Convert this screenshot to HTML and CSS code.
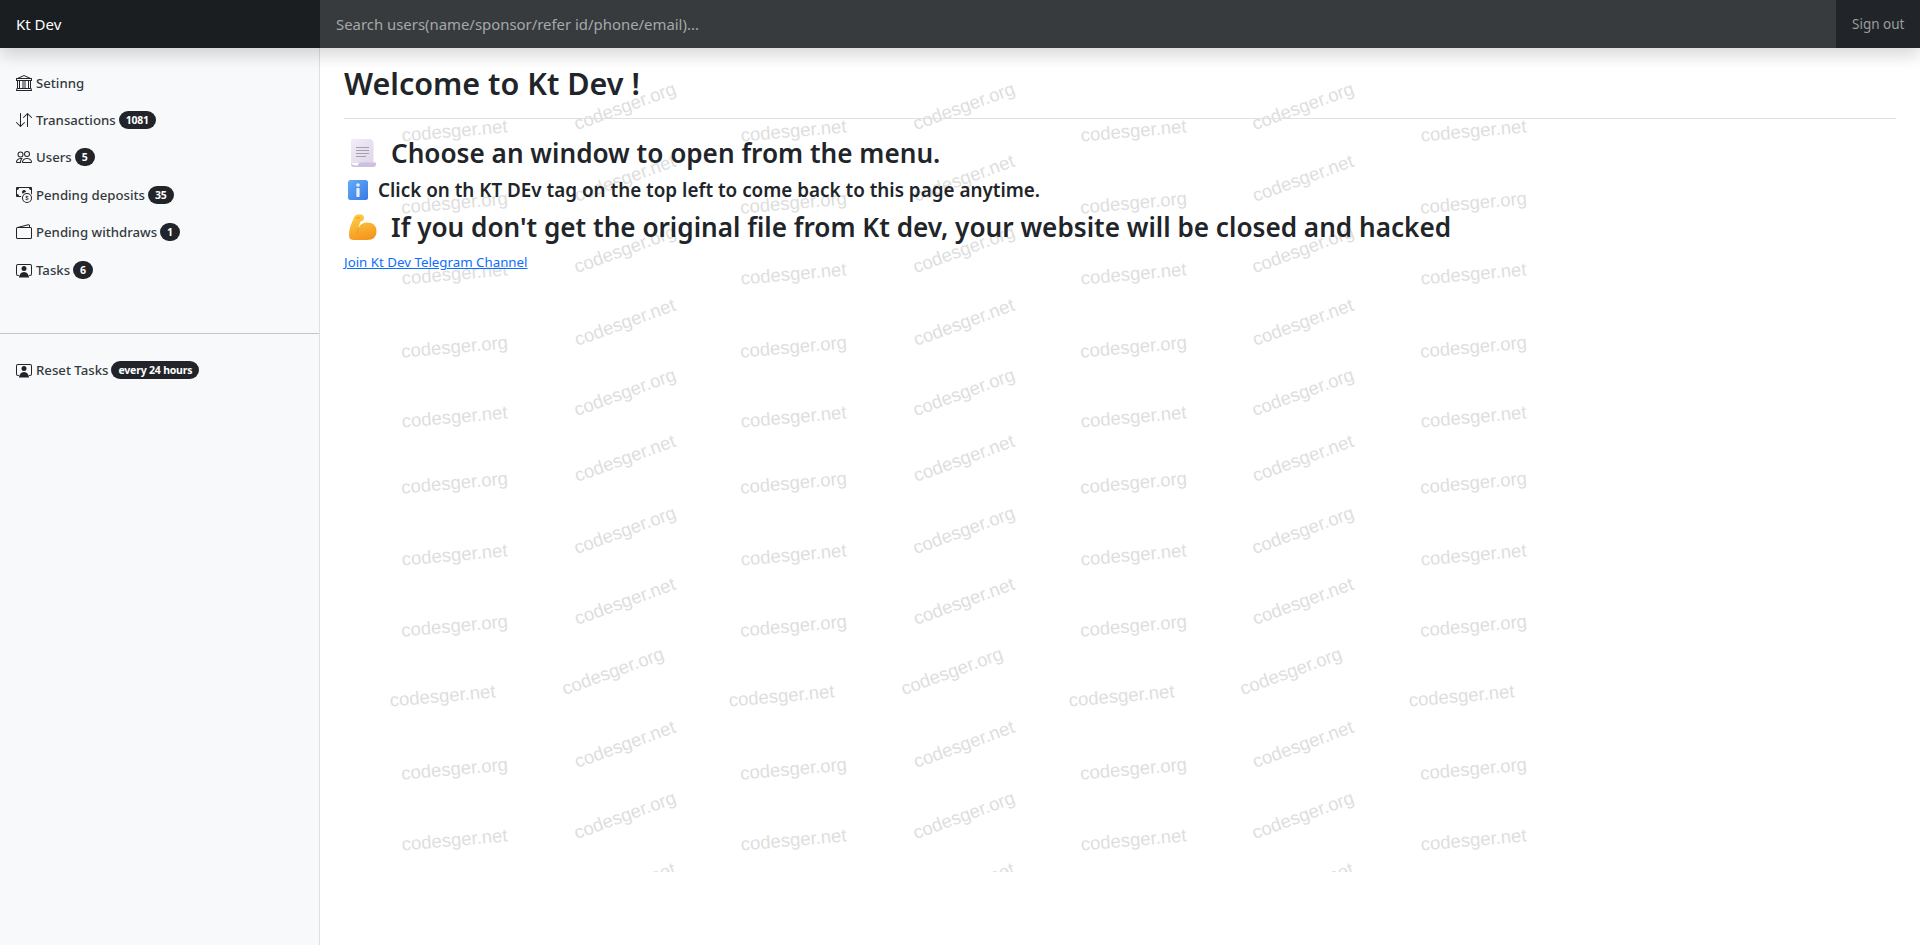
FILE: index.html
```html
<!DOCTYPE html>
<html lang="en">
<head>
<meta charset="utf-8">
<title>Kt Dev</title>
<link rel="stylesheet" href="styles.css">
</head>
<body>
<svg class="watermark" width="1920" height="872" viewBox="0 0 1920 872" aria-hidden="true">
  <defs>
    <g id="row-a">
      <text transform="translate(455 0) rotate(-5)">codesger.net</text>
      <text transform="translate(627 -25) rotate(-20)">codesger.org</text>
      <text transform="translate(794 0) rotate(-5)">codesger.net</text>
      <text transform="translate(966 -25) rotate(-20)">codesger.org</text>
      <text transform="translate(1134 0) rotate(-5)">codesger.net</text>
      <text transform="translate(1305 -25) rotate(-20)">codesger.org</text>
      <text transform="translate(1474 0) rotate(-5)">codesger.net</text>
    </g>
    <g id="row-b">
      <text transform="translate(455 0) rotate(-5)">codesger.org</text>
      <text transform="translate(627 -25) rotate(-20)">codesger.net</text>
      <text transform="translate(794 0) rotate(-5)">codesger.org</text>
      <text transform="translate(966 -25) rotate(-20)">codesger.net</text>
      <text transform="translate(1134 0) rotate(-5)">codesger.org</text>
      <text transform="translate(1305 -25) rotate(-20)">codesger.net</text>
      <text transform="translate(1474 0) rotate(-5)">codesger.org</text>
    </g>
  </defs>
  <use href="#row-a" y="137"/>
  <use href="#row-b" y="209"/>
  <use href="#row-a" y="280"/>
  <use href="#row-b" y="353"/>
  <use href="#row-a" y="423"/>
  <use href="#row-b" y="489"/>
  <use href="#row-a" y="561"/>
  <use href="#row-b" y="632"/>
  <use href="#row-a" x="-12" y="702"/>
  <use href="#row-b" y="775"/>
  <use href="#row-a" y="846"/>
  <use href="#row-b" y="917"/>
</svg>

<header class="navbar">
  <a class="brand" href="#">Kt Dev</a>
  <input class="search" type="text" placeholder="Search users(name/sponsor/refer id/phone/email)...">
  <a class="signout" href="#">Sign out</a>
</header>

<div class="layout">
  <nav class="sidebar">
    <ul class="menu">
      <li><a class="menu-link" href="#">
        <svg class="icon" viewBox="0 0 16 16"><path d="m8 0 6.61 3h.89a.5.5 0 0 1 .5.5v2a.5.5 0 0 1-.5.5H15v7a.5.5 0 0 1 .485.38l.5 2a.498.498 0 0 1-.485.62H.5a.498.498 0 0 1-.485-.62l.5-2A.501.501 0 0 1 1 13V6H.5a.5.5 0 0 1-.5-.5v-2A.5.5 0 0 1 .5 3h.89L8 0ZM3.777 3h8.447L8 1 3.777 3ZM2 6v7h1V6H2Zm2 0v7h2.5V6H4Zm3.5 0v7h1V6h-1Zm2 0v7H12V6H9.5ZM13 6v7h1V6h-1Zm2-1V4H1v1h14Zm-.39 9H1.39l-.25 1h13.72l-.25-1Z"/></svg>
        <span>Setinng</span></a></li>
      <li><a class="menu-link" href="#">
        <svg class="icon" viewBox="0 0 16 16"><path d="M11.5 15a.5.5 0 0 0 .5-.5V2.707l3.146 3.147a.5.5 0 0 0 .708-.708l-4-4a.5.5 0 0 0-.708 0l-4 4a.5.5 0 1 0 .708.708L11 2.707V14.5a.5.5 0 0 0 .5.5zm-7-14a.5.5 0 0 1 .5.5v11.793l3.146-3.147a.5.5 0 0 1 .708.708l-4 4a.5.5 0 0 1-.708 0l-4-4a.5.5 0 0 1 .708-.708L4 13.293V1.5a.5.5 0 0 1 .5-.5z"/></svg>
        <span>Transactions</span><span class="badge">1081</span></a></li>
      <li><a class="menu-link" href="#">
        <svg class="icon" viewBox="0 0 16 16"><path d="M15 14s1 0 1-1-1-4-5-4-5 3-5 4 1 1 1 1h8Zm-7.978-1A.261.261 0 0 1 7 12.996c.001-.264.167-1.03.76-1.72C8.312 10.629 9.282 10 11 10c1.717 0 2.687.63 3.24 1.276.593.69.758 1.457.76 1.72l-.008.002a.274.274 0 0 1-.014.002H7.022ZM11 7a2 2 0 1 0 0-4 2 2 0 0 0 0 4Zm3-2a3 3 0 1 1-6 0 3 3 0 0 1 6 0ZM6.936 9.28a5.88 5.88 0 0 0-1.23-.247A7.35 7.35 0 0 0 5 9c-4 0-5 3-5 4 0 .667.333 1 1 1h4.216A2.238 2.238 0 0 1 5 13c0-1.01.377-2.042 1.09-2.904.243-.294.526-.569.846-.816ZM4.92 10A5.493 5.493 0 0 0 4 13H1c0-.26.164-1.03.76-1.724.545-.636 1.492-1.256 3.16-1.275ZM1.5 5.5a3 3 0 1 1 6 0 3 3 0 0 1-6 0Zm3-2a2 2 0 1 0 0 4 2 2 0 0 0 0-4Z"/></svg>
        <span>Users</span><span class="badge">5</span></a></li>
      <li><a class="menu-link" href="#">
        <svg class="icon" viewBox="0 0 16 16"><path fill-rule="evenodd" d="M11 15a4 4 0 1 0 0-8 4 4 0 0 0 0 8zm5-4a5 5 0 1 1-10 0 5 5 0 0 1 10 0z"/><path d="M9.438 11.944c.047.596.518 1.06 1.363 1.116v.44h.375v-.443c.875-.061 1.386-.529 1.386-1.207 0-.618-.39-.936-1.09-1.1l-.296-.07v-1.2c.376.043.614.248.671.532h.658c-.047-.575-.54-1.024-1.329-1.073V8.5h-.375v.45c-.747.073-1.255.522-1.255 1.158 0 .562.378.92 1.007 1.066l.248.061v1.272c-.384-.058-.639-.27-.696-.563h-.668zm1.36-1.354c-.369-.085-.569-.26-.569-.522 0-.294.216-.514.572-.578v1.1h-.003zm.432.746c.449.104.655.272.655.569 0 .339-.257.571-.709.614v-1.195l.054.012z"/><path d="M1 0a1 1 0 0 0-1 1v8a1 1 0 0 0 1 1h4.083c.058-.344.145-.678.258-1H3a2 2 0 0 0-2-2V3a2 2 0 0 0 2-2h10a2 2 0 0 0 2 2v3.528c.38.34.717.728 1 1.154V1a1 1 0 0 0-1-1H1z"/><path d="M9.998 5.083 10 5a2 2 0 1 0-3.132 1.65 5.982 5.982 0 0 1 3.13-1.567z"/></svg>
        <span>Pending deposits</span><span class="badge">35</span></a></li>
      <li><a class="menu-link" href="#">
        <svg class="icon" viewBox="0 0 16 16"><path d="M12.136.326A1.5 1.5 0 0 1 14 1.78V3h.5A1.5 1.5 0 0 1 16 4.5v9a1.5 1.5 0 0 1-1.5 1.5h-13A1.5 1.5 0 0 1 0 13.5v-9a1.5 1.5 0 0 1 1.432-1.499L12.136.326zM5.562 3H13V1.78a.5.5 0 0 0-.621-.484L5.562 3zM1.5 4a.5.5 0 0 0-.5.5v9a.5.5 0 0 0 .5.5h13a.5.5 0 0 0 .5-.5v-9a.5.5 0 0 0-.5-.5h-13z"/></svg>
        <span>Pending withdraws</span><span class="badge">1</span></a></li>
      <li><a class="menu-link" href="#">
        <svg class="icon" viewBox="0 0 16 16"><path d="M8 9a2.5 2.5 0 1 0 0-5 2.5 2.5 0 0 0 0 5Z"/><path d="M2 2a2 2 0 0 0-2 2v8a2 2 0 0 0 2 2h.5a.5.5 0 0 0 0-1H2a1 1 0 0 1-1-1V4a1 1 0 0 1 1-1h12a1 1 0 0 1 1 1v8a1 1 0 0 1-1 1h-.5a.5.5 0 0 0 0 1h.5a2 2 0 0 0 2-2V4a2 2 0 0 0-2-2H2Z"/><path d="M3 15.6C3 13 5 10 8 10s5 3 5 5.6Z"/></svg>
        <span>Tasks</span><span class="badge">6</span></a></li>
    </ul>
    <hr class="divider">
    <ul class="menu">
      <li><a class="menu-link" href="#">
        <svg class="icon" viewBox="0 0 16 16"><path d="M8 9a2.5 2.5 0 1 0 0-5 2.5 2.5 0 0 0 0 5Z"/><path d="M2 2a2 2 0 0 0-2 2v8a2 2 0 0 0 2 2h.5a.5.5 0 0 0 0-1H2a1 1 0 0 1-1-1V4a1 1 0 0 1 1-1h12a1 1 0 0 1 1 1v8a1 1 0 0 1-1 1h-.5a.5.5 0 0 0 0 1h.5a2 2 0 0 0 2-2V4a2 2 0 0 0-2-2H2Z"/><path d="M3 15.6C3 13 5 10 8 10s5 3 5 5.6Z"/></svg>
        <span>Reset Tasks</span><span class="badge">every 24 hours</span></a></li>
    </ul>
  </nav>

  <main class="content">
    <div class="page-header"><h1 class="title">Welcome to Kt Dev !</h1></div>

    <h3 class="line line-choose">
      <svg class="emoji emoji-page" viewBox="0 0 25 28">
        <defs><linearGradient id="pg" x1="0" y1="0" x2="1" y2="1"><stop offset="0" stop-color="#f1edf6"/><stop offset="1" stop-color="#dfd6ea"/></linearGradient></defs>
        <path d="M0 1.500Q0 0 1.500 0H20L22.500 2.500V24H0V1.500Z" fill="url(#pg)"/>
        <path d="M0 23V25Q0 28 3 28H22Q25 28 25 25V23.500H9Q7.500 23.500 7.500 25Q7 27 4 26.500Q0 26 0 23Z" fill="#cdbfe2"/>
        <path d="M5 8.500H18M5 11.500H18M5 14.500H18M5 17.500H15" stroke="#9b98a8" stroke-width=".9"/>
      </svg>
      <span>Choose an window to open from the menu.</span>
    </h3>

    <h4 class="line line-info">
      <svg class="emoji emoji-info" viewBox="0 0 20 20">
        <defs><linearGradient id="inf" x1="0" y1="0" x2="1" y2="1"><stop offset="0" stop-color="#62aef6"/><stop offset="1" stop-color="#3a78e6"/></linearGradient></defs>
        <rect width="20" height="20" rx="2.500" fill="url(#inf)"/>
        <circle cx="10" cy="5" r="1.800" fill="#e8f2fd"/>
        <rect x="8.400" y="8" width="3.200" height="9" rx=".8" fill="#e8f2fd"/>
      </svg>
      <span>Click on th KT DEv tag on the top left to come back to this page anytime.</span>
    </h4>

    <h3 class="line line-warn">
      <svg class="emoji emoji-arm" viewBox="0 0 28 26">
        <defs><linearGradient id="arm" x1=".3" y1="0" x2=".6" y2="1"><stop offset="0" stop-color="#fdcf45"/><stop offset="1" stop-color="#f5941d"/></linearGradient></defs>
        <path d="M4 6Q5 .5 10 .2Q15 0 15 4Q15 7 11.500 7.500Q10 11 9.500 14Q12 8.500 18 8.500Q27.500 8.500 27.500 17.500Q27.500 26 18 26H5Q0 26 0 21.500Q0 14 4 6Z" fill="url(#arm)"/>
        <path d="M7 4.500Q9 2.500 11 4" fill="none" stroke="#ee9a22" stroke-width="1"/>
        <path d="M9.500 14Q8 17 8.500 20" fill="none" stroke="#ee9a22" stroke-width="1"/>
      </svg>
      <span>If you don't get the original file from Kt dev, your website will be closed and hacked</span>
    </h3>

    <a class="join" href="#">Join Kt Dev Telegram Channel</a>
  </main>
</div>
</body>
</html>
```
FILE: styles.css
```css
* { box-sizing: border-box; }
html, body { height: 100%; }
body {
  margin: 0;
  position: relative;
  overflow: hidden;
  background: #fff;
  color: #212529;
  font-family: "Noto Sans", "Open Sans", sans-serif;
  font-size: 16px;
}
a { text-decoration: none; }

.watermark {
  position: absolute;
  left: 0;
  top: 0;
  display: block;
  font-family: "Liberation Sans", Arial, sans-serif;
  font-size: 18.500px;
  text-anchor: middle;
  fill: #dedede;
}

.navbar {
  position: relative;
  z-index: 2;
  display: flex;
  height: 48px;
  background: #212529;
  box-shadow: 0 8px 16px rgba(0, 0, 0, .15);
}
.brand {
  flex: 0 0 320px;
  padding: 0 16px;
  background: #1a1e21;
  color: #fff;
  font-size: 15px;
  line-height: 48px;
}
.search {
  flex: 1;
  min-width: 0;
  height: 48px;
  padding: 0 16px;
  border: 0;
  outline: 0;
  background: #373b3e;
  color: #fff;
  font: 14.900px "Noto Sans", sans-serif;
}
.search::placeholder { color: #a6a8a9; opacity: 1; }
.signout {
  flex: 0 0 84px;
  padding-left: 16px;
  color: #9a9c9e;
  font-size: 13.500px;
  line-height: 48px;
}

.layout {
  position: relative;
  display: grid;
  grid-template-columns: 320px 1fr;
  height: calc(100vh - 48px);
}
.sidebar {
  padding-top: 16px;
  background: #f8f9fa;
  box-shadow: inset -1px 0 0 rgba(0, 0, 0, .1);
}
.menu { margin: 0; padding: 0; list-style: none; }
.menu-link {
  display: flex;
  align-items: center;
  height: 37.400px;
  padding: 0 16px;
  color: #343a40;
  font-size: 13.200px;
  font-weight: 500;
}
.icon { flex: none; width: 16px; height: 16px; margin-right: 4px; fill: #212529; }
.badge {
  margin-left: 3px;
  padding: 3px 7px;
  border-radius: 10px;
  background: #212529;
  color: #fff;
  font-size: 10.500px;
  font-weight: 700;
  letter-spacing: -.2px;
  line-height: 12px;
  white-space: nowrap;
}
.divider {
  height: 1px;
  margin: 45px 0 17px;
  border: 0;
  background: #c4c6c8;
  width: 319px;
}

.content { position: relative; padding: 16px 24px 0; }
.page-header { padding-bottom: 16px; border-bottom: 1px solid #dee2e6; }
.title {
  margin: 0;
  font-size: 30.500px;
  font-weight: 600;
  line-height: 38px;
}
.line {
  display: flex;
  align-items: center;
  margin: 0;
  font-weight: 600;
  white-space: nowrap;
}
.line-choose { height: 36px; margin-top: 16px; font-size: 26.150px; }
.line-info { height: 24px; margin-top: 7px; font-size: 18.850px; }
.line-warn { height: 36px; margin-top: 7px; font-size: 26.150px; }
.emoji { flex: none; }
.emoji-page { width: 25px; height: 28px; margin: 0 15px 0 7px; }
.emoji-info { width: 20px; height: 20px; margin: 0 10px 0 4px; }
.emoji-arm { width: 28px; height: 26px; margin: 0 14px 0 5px; }
.join {
  display: block;
  margin-top: 8px;
  color: #0d6efd;
  font-size: 13.300px;
  line-height: 18px;
  text-decoration: underline;
}
```
